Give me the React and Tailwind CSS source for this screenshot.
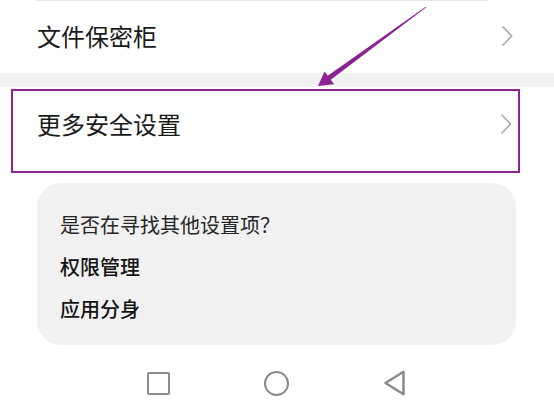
import React from "react";

const Chevron = () => (
  <svg width="12" height="22" viewBox="0 0 12 22" className="shrink-0">
    <polyline points="1.5,1.5 10.5,11 1.5,20.5" fill="none" stroke="#adadad" strokeWidth="1.8" strokeLinejoin="miter" />
  </svg>
);

export default function App() {
  return (
    <div
      className="relative w-[554px] h-[408px] overflow-hidden bg-white text-[#1a1a1a]"
      style={{ fontFamily: '"Noto Sans CJK SC", "Noto Sans", sans-serif' }}
    >
      {/* Row 1 */}
      <div className="h-[73px] flex flex-col">
        <div className="ml-[36px] w-[451px] h-px bg-[#e6e6e6]" />
        <div className="flex-1 flex items-center justify-between pl-[37px] pr-[41px] pb-[2px]">
          <span className="text-[24px] leading-none">文件保密柜</span>
          <Chevron />
        </div>
      </div>

      {/* gray band */}
      <div className="h-[14px] bg-[#f2f2f2]" />

      {/* highlighted row */}
      <div className="mt-[2px] ml-[11px] w-[509px] h-[84px] border-2 border-[#8b2391] flex items-center justify-between pl-[24px] pr-[6px] pb-[15px]">
        <span className="text-[24px] leading-none">更多安全设置</span>
        <Chevron />
      </div>

      {/* suggestion card */}
      <div className="mt-[10px] ml-[37px] w-[479px] h-[162px] rounded-[24px] bg-[#f1f1f1] pl-[23px] pt-[32px] flex flex-col gap-[22px]">
        <span className="text-[20px] leading-none text-[#262626]">是否在寻找其他设置项？</span>
        <span className="text-[20px] leading-none font-medium text-[#141414]">权限管理</span>
        <span className="text-[20px] leading-none font-medium text-[#141414]">应用分身</span>
      </div>

      {/* nav bar */}
      <div className="mt-[25px] flex items-center">
        <div className="ml-[147px] w-[23px] h-[23px] border-[2.5px] border-[#8a8a8a] rounded-[2px]" />
        <div className="ml-[94px] w-[25px] h-[25px] border-[2.5px] border-[#8a8a8a] rounded-full" />
        <svg className="ml-[94px]" width="23" height="26" viewBox="0 0 23 26">
          <polygon points="20.5,1.8 20.5,24.2 2.5,13" fill="none" stroke="#8a8a8a" strokeWidth="2.5" strokeLinejoin="round" />
        </svg>
      </div>

      {/* annotation arrow */}
      <svg className="absolute left-0 top-0 pointer-events-none" width="554" height="408" viewBox="0 0 554 408">
        <polygon
          points="425.7,6.7 327.7,75.8 324.5,71.5 318,86 334.1,84.2 330.8,79.8 426.3,7.3"
          fill="#8b2391"
        />
      </svg>
    </div>
  );
}
